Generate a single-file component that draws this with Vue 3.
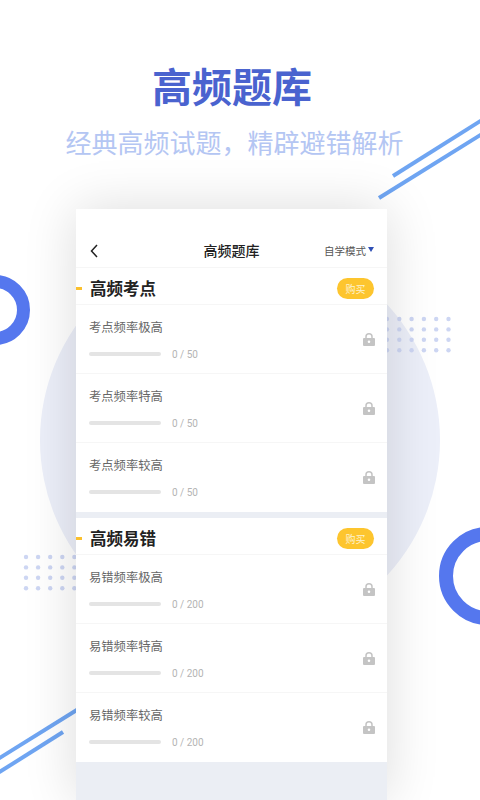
<script setup>
const groups = [
  { title: '高频考点', items: ['考点频率极高', '考点频率特高', '考点频率较高'], total: 50 },
  { title: '高频易错', items: ['易错频率极高', '易错频率特高', '易错频率较高'], total: 200 },
]
const dotRows = [0, 1, 2, 3]
const dotCols = [0, 1, 2, 3, 4, 5]
</script>

<template>
  <div class="page">
    <svg class="decor" width="480" height="800" viewBox="0 0 480 800">
      <circle cx="240" cy="440" r="200" fill="#eceff9" />
      <circle cx="-5" cy="310" r="28.5" fill="none" stroke="#5577ee" stroke-width="13" />
      <circle cx="488" cy="576" r="42" fill="none" stroke="#5577ee" stroke-width="14" />
      <g stroke="#6fa5f2" stroke-width="4">
        <line x1="393" y1="176" x2="482" y2="120" />
        <line x1="379" y1="198" x2="482" y2="134" />
        <line x1="-2" y1="759" x2="80" y2="708" />
        <line x1="-2" y1="773" x2="63" y2="732" />
      </g>
      <g fill="#cdd6f3">
        <template v-for="r in dotRows" :key="r">
          <circle v-for="c in dotCols" :key="c" :cx="387 + c * 12.3" :cy="319 + r * 10.4" r="2.2" />
          <circle v-for="c in dotCols" :key="'l' + c" :cx="26 + c * 12.1" :cy="557 + r * 10.4" r="2.2" />
        </template>
      </g>
    </svg>

    <header class="hero">
      <h1 class="hero-title">高频题库</h1>
      <p class="hero-sub">经典高频试题，精辟避错解析</p>
    </header>

    <main class="card">
      <div class="nav">
        <svg class="back" width="8" height="14" viewBox="0 0 8 14">
          <path d="M7 1 L1.5 7 L7 13" fill="none" stroke="#222" stroke-width="1.5" />
        </svg>
        <span class="nav-title">高频题库</span>
        <span class="mode">自学模式<i class="caret"></i></span>
      </div>

      <section v-for="g in groups" :key="g.title" class="group">
        <div class="group-head">
          <i class="marker"></i>
          <span class="group-title">{{ g.title }}</span>
          <span class="buy">购买</span>
        </div>
        <div v-for="item in g.items" :key="item" class="row">
          <div class="row-main">
            <div class="row-title">{{ item }}</div>
            <div class="progress">
              <span class="bar"></span>
              <span class="count">0 / {{ g.total }}</span>
            </div>
          </div>
          <svg class="lock" width="12" height="13" viewBox="0 0 12 13">
            <path d="M3 5.5 V3.8 A3 3 0 0 1 9 3.8 V5.5" fill="none" stroke="#c4c4c4" stroke-width="1.5" />
            <path fill-rule="evenodd" d="M1 5 H11 A1 1 0 0 1 12 6 V12 A1 1 0 0 1 11 13 H1 A1 1 0 0 1 0 12 V6 A1 1 0 0 1 1 5 Z M6 7.5 A1.3 1.3 0 1 0 6 10.1 A1.3 1.3 0 1 0 6 7.5 Z" fill="#c4c4c4" />
          </svg>
        </div>
      </section>
    </main>
  </div>
</template>

<style scoped>
.page {
  position: relative;
  width: 480px;
  height: 800px;
  overflow: hidden;
  background: #fff;
  font-family: "Noto Sans CJK SC", "Noto Sans", sans-serif;
}
.decor {
  position: absolute;
  left: 0;
  top: 0;
}
.hero {
  position: relative;
  height: 209px;
  box-sizing: border-box;
  padding-top: 55px;
  text-align: center;
}
.hero-title {
  margin: 0;
  padding-right: 16px;
  font-size: 40px;
  line-height: 60px;
  font-weight: 700;
  color: #4a63cf;
}
.hero-sub {
  margin: 0;
  padding-top: 8px;
  padding-right: 11px;
  font-size: 26px;
  line-height: 38px;
  font-weight: 400;
  color: #b4c6f3;
}
.card {
  position: relative;
  width: 311px;
  height: 591px;
  margin-left: 76px;
  background: #ebeef4;
  box-shadow: 0 0 50px rgba(0, 0, 0, 0.14);
}
.nav {
  position: relative;
  height: 59px;
  box-sizing: border-box;
  padding: 25px 13px 0 14px;
  display: flex;
  align-items: center;
  justify-content: space-between;
  background: #fff;
  border-bottom: 1px solid #f6f6f6;
}
.back {
  display: block;
}
.nav-title {
  position: absolute;
  left: 0;
  right: 0;
  top: 30px;
  text-align: center;
  font-size: 14px;
  line-height: 22px;
  font-weight: 500;
  color: #222;
}
.mode {
  display: flex;
  align-items: center;
  font-size: 10.5px;
  line-height: 16px;
  color: #555;
}
.caret {
  width: 0;
  height: 0;
  margin-left: 2px;
  margin-top: -2px;
  border-left: 3.5px solid transparent;
  border-right: 3.5px solid transparent;
  border-top: 5px solid #2f4fb5;
}
.group {
  background: #fff;
  margin-bottom: 6px;
}
.group-head {
  position: relative;
  height: 37px;
  box-sizing: border-box;
  padding: 4px 13px 0 14px;
  display: flex;
  align-items: center;
  justify-content: space-between;
  border-bottom: 1px solid #f6f6f6;
}
.marker {
  position: absolute;
  left: 0;
  top: 19px;
  width: 6px;
  height: 3px;
  background: #fbc02d;
}
.group-title {
  font-size: 16.5px;
  line-height: 24px;
  font-weight: 700;
  color: #222;
}
.buy {
  width: 37px;
  height: 21px;
  margin-top: 1px;
  border-radius: 10.5px;
  background: #fdc52e;
  color: #fdf3d0;
  font-size: 10px;
  line-height: 21px;
  text-align: center;
}
.row {
  height: 69px;
  box-sizing: border-box;
  padding: 13px 12px 0 13px;
  display: flex;
  justify-content: space-between;
  align-items: flex-start;
  border-bottom: 1px solid #f6f6f6;
}
.row:last-child {
  border-bottom: 0;
}
.row-title {
  font-size: 12.3px;
  line-height: 18px;
  color: #666;
}
.progress {
  margin-top: 10px;
  display: flex;
  align-items: center;
  height: 16px;
}
.bar {
  width: 72px;
  height: 4px;
  border-radius: 2px;
  background: #e4e4e4;
}
.count {
  margin-left: 11px;
  font-size: 10px;
  color: #b4b4b4;
  font-family: "Roboto", "Noto Sans", sans-serif;
}
.lock {
  margin-top: 15px;
}
</style>
